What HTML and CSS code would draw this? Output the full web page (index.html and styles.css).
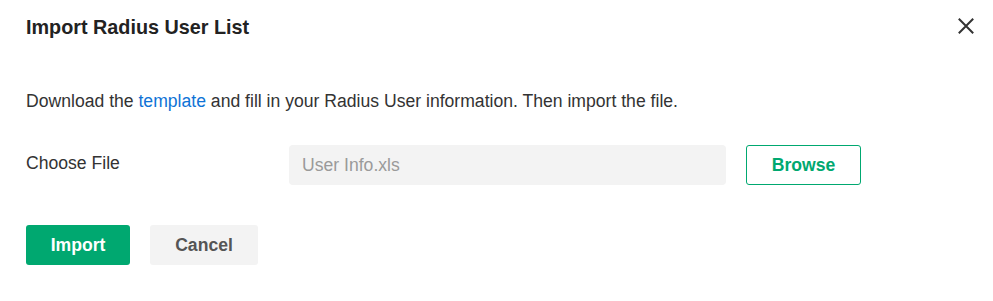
FILE: index.html
```html
<!DOCTYPE html>
<html>
<head>
<meta charset="utf-8">
<link rel="stylesheet" href="styles.css">
</head>
<body>
<div class="dialog">
  <div class="header">
    <h1 class="title">Import Radius User List</h1>
    <button class="close" aria-label="Close">
      <svg width="16" height="16" viewBox="0 0 16 16"><path d="M0.8 0.8 L15.2 15.2 M15.2 0.8 L0.8 15.2" stroke="#333" stroke-width="2" fill="none"/></svg>
    </button>
  </div>
  <p class="desc">Download the <a class="link" href="#">template</a> and fill in your Radius User information. Then import the file.</p>
  <div class="row">
    <label class="label">Choose File</label>
    <div class="input">User Info.xls</div>
    <button class="btn btn-outline">Browse</button>
  </div>
  <div class="actions">
    <button class="btn btn-primary">Import</button>
    <button class="btn btn-secondary">Cancel</button>
  </div>
</div>
</body>
</html>
```
FILE: styles.css
```css
* { box-sizing: border-box; }
html, body { margin: 0; padding: 0; background: #fff; }
body { font-family: "Liberation Sans", Arial, sans-serif; color: #333; }
.dialog { width: 993px; padding: 15px 19px 0 26px; }
.header { display: flex; justify-content: space-between; align-items: flex-start; height: 24px; }
.title { margin: 0; font-size: 19.8px; font-weight: bold; color: #222; line-height: 24px; }
.close { border: 0; background: none; padding: 0; width: 16px; height: 16px; margin-top: 3px; display: flex; cursor: pointer; }
.desc { margin: 52px 0 0; font-size: 17.6px; line-height: 20px; color: #333; }
.link { color: #0f73d6; text-decoration: none; }
.row { display: flex; align-items: center; margin-top: 34px; }
.label { width: 263px; font-size: 17.6px; line-height: 20px; color: #333; margin-top: -4px; }
.input { width: 437px; height: 40px; background: #f3f3f3; border-radius: 4px; padding: 0 13px; font-size: 17.6px; line-height: 40px; color: #9a9a9a; }
.btn { font-family: "Liberation Sans", Arial, sans-serif; font-size: 17.6px; font-weight: bold; height: 40px; border-radius: 3px; border: 0; padding: 0; cursor: pointer; }
.btn-outline { margin-left: 20px; width: 115px; background: #fff; border: 1px solid #00a870; color: #00a870; }
.actions { display: flex; gap: 20px; margin-top: 40px; }
.btn-primary { width: 104px; background: #00a870; color: #fff; }
.btn-secondary { width: 108px; background: #f3f3f3; color: #555; }
```
